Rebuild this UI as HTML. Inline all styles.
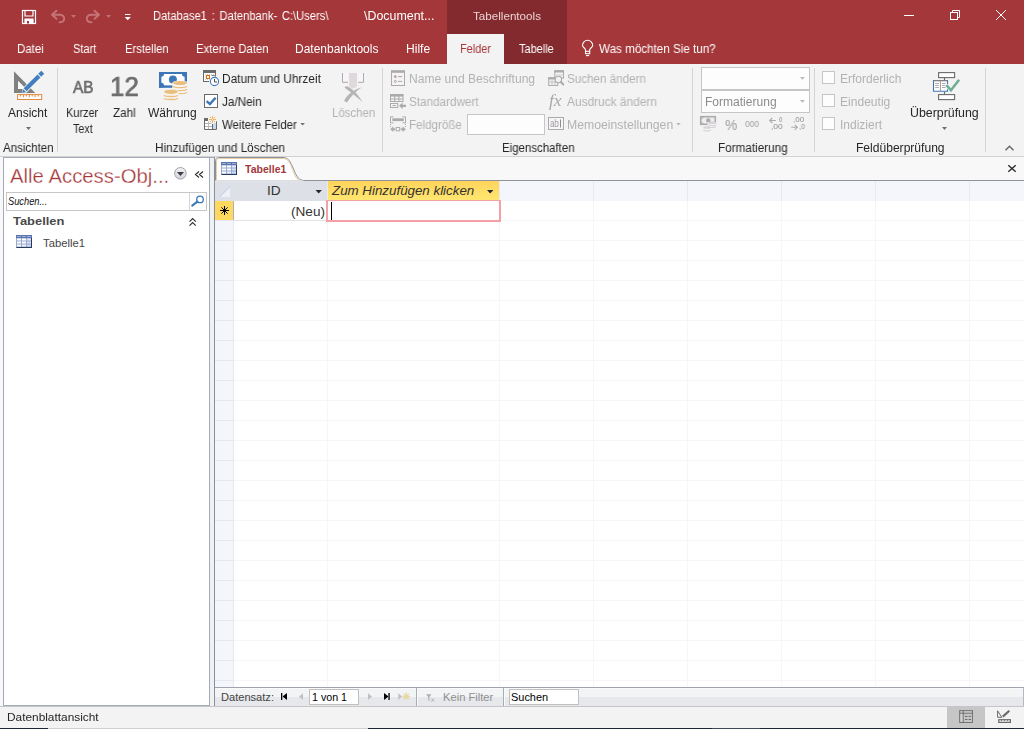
<!DOCTYPE html>
<html lang="de"><head><meta charset="utf-8"><title>Access - Database1</title>
<style>
html,body{margin:0;padding:0;background:#f1f1f1;}
body{width:1024px;height:729px;position:relative;overflow:hidden;font-family:"Liberation Sans",sans-serif;}
.a{position:absolute;}
.t{position:absolute;white-space:pre;line-height:1;transform-origin:0 0;}
.g{will-change:transform;}
svg{position:absolute;overflow:visible;}
.sep{position:absolute;width:1px;top:68px;height:84px;background:#d4d4d4;}
.cb{position:absolute;width:11px;height:11px;border:1px solid #c6c6c6;background:#fdfdfd;left:822px;}
.combo{position:absolute;left:701px;width:107px;height:21px;border:1px solid #c6c6c6;background:#fdfdfd;}
</style></head><body>
<!-- title + tab strip -->
<div class="a" id="titlebar" style="left:0;top:0;width:1024px;height:64px;background:#a4373a"></div>
<div class="a" id="ctx" style="left:447px;top:0;width:120px;height:64px;background:#822a2e"></div>
<div class="a" id="tabsel" style="left:447px;top:34px;width:57px;height:30px;background:#f3f3f3"></div>
<!-- ribbon -->
<div class="a" id="ribbon" style="left:0;top:64px;width:1024px;height:92px;background:#f3f3f3;border-bottom:1px solid #d2d2d2"></div>
<div class="sep" style="left:57px"></div>
<div class="sep" style="left:382px"></div>
<div class="sep" style="left:692px"></div>
<div class="sep" style="left:814px"></div>
<div class="sep" style="left:985px"></div>
<div class="a" style="left:467px;top:114px;width:76px;height:19px;border:1px solid #c6c6c6;background:#fdfdfd"></div>
<div class="combo" style="top:67px"></div>
<div class="combo" style="top:90px"></div>
<div class="cb" style="top:71px"></div><div class="cb" style="top:94px"></div><div class="cb" style="top:117px"></div>
<!-- work area -->
<div class="a" id="work" style="left:0;top:157px;width:1024px;height:549px;background:#f8f8f8"></div>
<div class="a" id="nav" style="left:3px;top:157px;width:205px;height:547px;background:#fff;border:1px solid #a3abb8;border-width:1px 1px 1px 1px"></div>
<div class="a" style="left:6px;top:192px;width:199px;height:17px;border:1px solid #c6c6c6;background:#fff"></div>
<div class="a" style="left:189px;top:193px;width:1px;height:17px;background:#d4d4d4"></div>
<div class="a" style="left:210px;top:157px;width:4px;height:549px;background:#f0f1f3;border-top:1px solid #a3abb8;box-sizing:border-box"></div>
<div class="a" id="split" style="left:214px;top:157px;width:1px;height:549px;background:#8a919d"></div>
<!-- document -->
<div class="a" id="grid" style="left:215px;top:181px;width:809px;height:506px;background:#fff"></div>
<div class="a" id="hdrline" style="left:215px;top:180px;width:809px;height:1px;background:#8f939b"></div>
<div class="a" id="hdrbg" style="left:215px;top:181px;width:809px;height:20px;background:#f5f6fc"></div>
<div class="a" id="selcol" style="left:215px;top:201px;width:18px;height:486px;background:#f5f6fc"></div>
<div class="a" id="gridlines" style="left:215px;top:201px;width:809px;height:486px;background:
 repeating-linear-gradient(to bottom,transparent 0,transparent 19px,#f6f6f7 19px,#f6f6f7 20px)"></div>
<div class="a" style="left:215px;top:201px;width:18px;height:486px;background:repeating-linear-gradient(to bottom,transparent 0,transparent 19px,#e6e8ee 19px,#e6e8ee 20px)"></div><div class="a" style="left:233px;top:201px;width:1px;height:486px;background:#e6e8ef"></div>
<div class="a" style="left:327px;top:201px;width:1px;height:486px;background:#f6f6f7"></div>
<div class="a" style="left:499px;top:181px;width:1px;height:20px;background:#e8e9ee"></div><div class="a" style="left:499px;top:201px;width:1px;height:486px;background:#f6f6f7"></div>
<div class="a" style="left:593px;top:181px;width:1px;height:20px;background:#e8e9ee"></div><div class="a" style="left:593px;top:201px;width:1px;height:486px;background:#f6f6f7"></div>
<div class="a" style="left:687px;top:181px;width:1px;height:20px;background:#e8e9ee"></div><div class="a" style="left:687px;top:201px;width:1px;height:486px;background:#f6f6f7"></div>
<div class="a" style="left:781px;top:181px;width:1px;height:20px;background:#e8e9ee"></div><div class="a" style="left:781px;top:201px;width:1px;height:486px;background:#f6f6f7"></div>
<div class="a" style="left:875px;top:181px;width:1px;height:20px;background:#e8e9ee"></div><div class="a" style="left:875px;top:201px;width:1px;height:486px;background:#f6f6f7"></div>
<div class="a" style="left:969px;top:181px;width:1px;height:20px;background:#e8e9ee"></div><div class="a" style="left:969px;top:201px;width:1px;height:486px;background:#f6f6f7"></div>
<div class="a" id="hdr1" style="left:215px;top:181px;width:112px;height:20px;background:#dde0e6"></div>
<div class="a" style="left:327px;top:181px;width:1px;height:20px;background:#e9ebef"></div>
<div class="a" id="hdr2" style="left:328px;top:181px;width:171px;height:19px;background:linear-gradient(#ffd45c,#ffe670)"></div>
<div class="a" id="rowsel" style="left:215px;top:201px;width:18px;height:19px;background:#ffd95f;border-right:1px solid #aab0be"></div>
<div class="a" style="left:233px;top:220px;width:93px;height:1px;background:#e2e2e4"></div>
<div class="a" id="active" style="left:326px;top:200px;width:171px;height:19px;border:2px solid #f4a0a5;border-top-width:1px;background:#fff"></div>
<div class="a" id="caret" style="left:331px;top:202px;width:1px;height:18px;background:#000"></div>
<!-- record nav -->
<div class="a" id="recnav" style="left:215px;top:687px;width:808px;height:18px;border-top:1px solid #9ea3ae;border-right:1px solid #b4b8c2;background:linear-gradient(#fafafb 0,#fafafb 1px,#f3f4f6 1px,#f3f4f6 9px,#e6e8ec 9px,#e6e8ec 100%)"></div>
<div class="a" style="left:309px;top:689px;width:48px;height:14px;border:1px solid #c0c0c0;background:#fff"></div>
<div class="a" style="left:509px;top:689px;width:68px;height:14px;border:1px solid #c0c0c0;background:#fff"></div>
<div class="a" style="left:416px;top:688px;width:1px;height:18px;background:#a8acb8"></div><div class="a" style="left:417px;top:688px;width:1px;height:18px;background:#fafafa"></div>
<div class="a" style="left:503px;top:688px;width:1px;height:18px;background:#a8acb8"></div><div class="a" style="left:504px;top:688px;width:1px;height:18px;background:#fafafa"></div>
<!-- status bar -->
<div class="a" style="left:0;top:706px;width:1024px;height:1px;background:#c6c6c6"></div>
<div class="a" id="status" style="left:0;top:707px;width:1024px;height:22px;background:#f3f3f3"></div>
<div class="a" style="left:947px;top:707px;width:38px;height:21px;background:#c6c6c6"></div>
<div class="a" style="left:0;top:728px;width:48px;height:1px;background:#1d2836"></div>
<div class="a" style="left:48px;top:728px;width:320px;height:1px;background:#d0d0d0"></div><div class="a" style="left:368px;top:728px;width:344px;height:1px;background:#1d2836"></div><div class="a" style="left:712px;top:728px;width:48px;height:1px;background:#3f4856"></div>
<div class="a" style="left:760px;top:728px;width:264px;height:1px;background:#1d2836"></div>
<svg width="1024" height="729" viewBox="0 0 1024 729" style="left:0;top:0">
<!-- QAT: save -->
<g id="i-save" fill="none" stroke="#fff" stroke-width="1.2">
<rect x="22.5" y="10.5" width="13" height="13"/>
<path d="M25 10.5V16H33V10.5" />
<path d="M25 23.5V19H33V23.5Z" fill="#fff"/>
<rect x="27" y="21" width="2" height="2.5" fill="#a4373a" stroke="none"/>
</g>
<!-- undo / redo (disabled) -->
<g id="i-undo" fill="none" stroke="#c47477" stroke-width="1.9" stroke-linecap="round" stroke-linejoin="round">
<path d="M56.5 10.8L52 14.8L56.5 18.8"/><path d="M52.5 14.8H59.5C66 14.8 65.5 22.3 59.5 22.3"/>
<path d="M94.5 10.8L99 14.8L94.5 18.8"/><path d="M98.5 14.8H91.5C85 14.8 85.500 22.3 91.5 22.3"/>
</g>
<path d="M71 15h5l-2.500 3z" fill="#c07074"/>
<path d="M106 15h5l-2.500 3z" fill="#c07074"/>
<!-- customize QAT -->
<rect x="125" y="14" width="5.500" height="1" fill="#fff"/>
<path d="M124.700 17h6.100l-3.050 3.300z" fill="#fff"/>
<!-- lightbulb -->
<g id="i-bulb" fill="none" stroke="#fff" stroke-width="1.100">
<path d="M585.500 51.300V50C585.500 48.200 582.500 47.300 582.500 45.400A5.100 5.100 0 1 1 592.700 45.400C592.700 47.300 589.700 48.200 589.700 50V51.300"/>
<rect x="585.500" y="51.300" width="4.200" height="2.400"/>
<path d="M586 55.600H589.200"/>
</g>
<!-- window controls -->
<g fill="none" stroke="#fff" stroke-width="1">
<path d="M904 15.500H914"/>
<rect x="950.500" y="12.500" width="7" height="7"/>
<path d="M952.500 12.500V10.500H959.500V17.500H957.500"/>
<path d="M996 10L1006 20M1006 10L996 20"/>
</g>

<!-- Ansicht big icon -->
<g id="i-view">
<path d="M18 80.700V89H26.300Z" fill="#fbfbfb"/><path d="M14 71.200V93H35.200ZM18 80.700V89H26.300Z" fill="#808080" fill-rule="evenodd"/>
<g transform="translate(22.100 92.900) rotate(-45)">
<path d="M-0.500 0L3.400 -2.900H29.900V2.900H3.400Z" fill="#f5f4f2"/>
<path d="M0 0L3.300 -2.100V2.100Z" fill="#437fc0"/>
<rect x="4.300" y="-2.100" width="19.600" height="4.200" fill="#437fc0"/>
<rect x="24.900" y="-2.100" width="4.300" height="4.200" fill="#437fc0"/>
</g>
<rect x="17.600" y="94.600" width="24.100" height="4.900" fill="#fff" stroke="#e18b3d" stroke-width="1"/>
<path d="M20.500 95v1.500M23.400 95v2.300M26.300 95v1.500M29.300 95v2.300M32.200 95v1.500M35.100 95v2.300M38.300 95v1.500" stroke="#e18b3d" stroke-width="1" fill="none"/>
</g>
<path d="M26 127h5l-2.500 3z" fill="#6e6e6e"/>

<!-- Währung big icon -->
<clipPath id="cpn"><rect x="159" y="72" width="28" height="15.600" rx="1.200"/></clipPath>
<g id="i-cur">
<rect x="159" y="72" width="28" height="15.600" rx="1.200" fill="#3c76b6"/>
<rect x="161.200" y="74" width="23.600" height="11.600" fill="#fff"/>
<g clip-path="url(#cpn)"><circle cx="161.200" cy="74" r="2.800" fill="#3c76b6"/><circle cx="184.800" cy="74" r="2.800" fill="#3c76b6"/>
<circle cx="161.200" cy="85.600" r="2.800" fill="#3c76b6"/><circle cx="184.800" cy="85.600" r="2.800" fill="#3c76b6"/></g>
<rect x="159" y="72" width="28" height="2" fill="#3c76b6"/><rect x="159" y="85.600" width="28" height="2" fill="#3c76b6"/>
<rect x="159" y="72" width="2.200" height="15.600" fill="#3c76b6"/><rect x="184.800" y="72" width="2.200" height="15.600" fill="#3c76b6"/>
<circle cx="172.900" cy="79.600" r="4" fill="#3c76b6"/>
<!-- right stack -->
<path d="M172.300 83v9.200a7.700 2.600 0 0 0 15.400 0V83a7.700 2.600 0 0 0 -15.400 0z" fill="#f6f3f0"/>
<g fill="none" stroke="#e9bf7e" stroke-width="1.300">
<path d="M173.300 92a6.700 1.600 0 0 0 13.400 0"/><path d="M173.300 89a6.700 1.600 0 0 0 13.400 0"/><path d="M173.300 86a6.700 1.600 0 0 0 13.400 0"/>
</g>
<ellipse cx="180" cy="83" rx="6.900" ry="2.100" fill="#e9bf7e"/>
<!-- left stack -->
<path d="M163.300 91.800v6.300a7.700 2.600 0 0 0 15.400 0V91.800a7.700 2.600 0 0 0 -15.400 0z" fill="#f6f3f0"/>
<g fill="none" stroke="#e9bf7e" stroke-width="1.300">
<path d="M164.300 97.900a6.700 1.600 0 0 0 13.400 0"/><path d="M164.300 94.900a6.700 1.600 0 0 0 13.400 0"/>
</g>
<ellipse cx="171" cy="91.800" rx="6.900" ry="2.100" fill="#e9bf7e"/>
</g>

<!-- Datum und Uhrzeit -->
<g id="i-date">
<rect x="203.500" y="72.500" width="12" height="9" fill="#fff" stroke="#6a6a6a"/>
<rect x="203" y="70" width="13" height="3" fill="#6a6a6a"/>
<path d="M205 74.500h10M205 77h2M205 79.500h6" stroke="#c9c9c9" stroke-dasharray="1 1" fill="none"/>
<path d="M211.500 75.500h4" stroke="#8a8a8a" fill="none"/>
<rect x="206.500" y="75.500" width="3" height="3" fill="#fff" stroke="#dd6b10" stroke-width="1"/>
<circle cx="214.500" cy="81.500" r="5.300" fill="#f5f4f2"/>
<circle cx="214.500" cy="81.500" r="4.100" fill="#fff" stroke="#3f7bbd" stroke-width="1.100"/>
<path d="M214.500 79V82H217" stroke="#4a4a4a" stroke-width="1" fill="none"/>
</g>
<!-- Ja/Nein checkbox -->
<rect x="204.500" y="94.500" width="13" height="13" fill="#fff" stroke="#6a6a6a"/>
<path d="M206.600 101.200L209.900 104.100L215.600 97.700" fill="none" stroke="#3c76b6" stroke-width="2.400"/>
<!-- Weitere Felder -->
<g id="i-more">
<rect x="205" y="121" width="7" height="8" fill="#fff"/>
<rect x="204" y="118" width="4" height="3" fill="#6a6a6a"/>
<path d="M204.500 118V129.500H216.500V121" stroke="#6a6a6a" fill="none"/>
<path d="M205 123.500h7M205 126.500h7" stroke="#b0b0b0" fill="none"/>
<path d="M208.500 121v8" stroke="#bdbdbd" fill="none"/>
<rect x="213" y="123" width="3" height="6" fill="#c5daf0"/>
<path d="M212.500 124V129" stroke="#6a6a6a" fill="none"/>
<circle cx="212.500" cy="119.500" r="4.300" fill="#f5f4f3"/>
<path d="M209.100 119.500h6.900M212.500 116.100v6.700" stroke="#ecb45c" stroke-width="1" fill="none"/>
<g fill="#ecb45c"><circle cx="210.400" cy="117.400" r="0.650"/><circle cx="214.600" cy="117.400" r="0.650"/><circle cx="210.400" cy="121.600" r="0.650"/><circle cx="214.600" cy="121.600" r="0.650"/><circle cx="212.500" cy="119.500" r="1.300"/></g>
<circle cx="212.500" cy="119.500" r="0.500" fill="#fff"/>
</g>
<path d="M300.300 123h4.600l-2.300 2.600z" fill="#6e6e6e"/>

<!-- Löschen (disabled) -->
<g id="i-del">
<rect x="342.500" y="73" width="6" height="9.300" fill="#f8f4f8"/><rect x="357.500" y="73" width="6" height="9.300" fill="#f8f4f8"/>
<path d="M342.500 73V82.300H348M363.500 73V82.300H358.200" fill="none" stroke="#ababab" stroke-width="1"/>
<path d="M349.100 73H357V86.500L353 88.700L349.100 86.500Z" fill="#ddd9dd"/>
<path d="M344.600 87.800Q345.100 85.700 347.200 86.300C353.500 89.300 358.300 95 362.400 101.900C356.200 96.700 350.600 92.200 344.600 87.800Z" fill="#b6b4b6"/><path d="M344.200 100.400C348 93.300 354.500 89.300 361.900 87.200C355.700 91 350.800 96.400 347.300 102.100Q345.300 102.700 344.200 100.400Z" fill="#b6b4b6"/>
</g>

<!-- Name und Beschriftung -->
<g id="i-name" stroke="#ababab" fill="none">
<rect x="391.500" y="71.500" width="13" height="14" fill="#f6f2f6"/>
<rect x="391" y="70.200" width="14" height="2.600" fill="#ababab" stroke="none"/>
<circle cx="395.300" cy="76.600" r="1" fill="#ababab"/><path d="M398 76.600h4.200"/>
<circle cx="395.300" cy="81.400" r="1"/><path d="M398 81.400h4.200"/>
</g>
<!-- Standardwert -->
<g id="i-def" stroke="#ababab" fill="none">
<rect x="390.500" y="95" width="12.500" height="6.500" fill="#f6f2f6"/>
<rect x="390" y="94" width="13.500" height="2.600" fill="#ababab" stroke="none"/>
<path d="M394.700 96v5.500M398.900 96v5.500M390.500 99h12.500"/>
<rect x="390.500" y="103.500" width="7.300" height="4" fill="#f6f2f6"/><path d="M392.500 105.500h3.500"/>
<path d="M399 105.800l3.600 -3.300v2.200h3.400v2.200h-3.400v2.200z" fill="#ababab" stroke="none"/>
</g>
<!-- Feldgröße -->
<g id="i-size" stroke="#ababab" fill="none">
<path d="M393.500 116.800h-3v6h3M402.500 116.800h3v6h-3"/>
<rect x="392.300" y="118.300" width="11.500" height="2.800" fill="#ababab" stroke="none"/>
<path d="M390.500 124v3M405.500 124v3" stroke-dasharray="1 1"/>
<rect x="396.200" y="127.500" width="3.500" height="3.300"/>
<path d="M390.200 129.200l3.200 -2.900v1.900h1.800v2h-1.800v1.900zM405.800 129.200l-3.200 -2.900v1.900h-1.800v2h1.800v1.900z" fill="#ababab" stroke="none"/>
</g>
<!-- Suchen ändern -->
<g id="i-lookup" stroke="#ababab" fill="none">
<rect x="554.800" y="71" width="8.700" height="7" fill="#f6f2f6"/><rect x="554.300" y="70.200" width="9.700" height="2.300" fill="#ababab" stroke="none"/>
<path d="M555 75h8.500" stroke="#cfcfcf"/>
<rect x="548.700" y="78" width="9" height="7.500" fill="#f6f2f6"/><rect x="548.200" y="77.200" width="10" height="2.300" fill="#ababab" stroke="none"/>
<path d="M548.700 82h9M552 79.500v6M555 79.500v6" stroke="#c4c4c4"/>
<circle cx="558.400" cy="79.500" r="3.200" fill="#f3eff3" stroke-width="1.100"/>
<path d="M560.800 82l2.500 2.500" stroke-width="2" stroke-linecap="round"/>
</g>
<!-- abl -->
<rect x="548.500" y="117.500" width="15" height="12" fill="#f8f5f8" stroke="#ababab"/>
<path d="M560.500 119.500v8" stroke="#8e8e8e" stroke-width="1"/>
<path d="M676.200 123h4.600l-2.300 2.600z" fill="#b8b8b8"/>
<!-- combo arrows -->
<path d="M800 77h4.800l-2.400 2.700z" fill="#b8b8b8"/><path d="M800 100h4.800l-2.400 2.700z" fill="#b8b8b8"/>
<!-- currency format (disabled) -->
<g id="i-curfmt">
<rect x="700.700" y="116.700" width="14.600" height="7.600" fill="#f0ecf0" stroke="#ababab" stroke-width="1.600"/><path d="M701 119.500l2.500-2.500M701 121.500l2.500 2.500" stroke="#ababab" stroke-width="1" fill="none"/>
<circle cx="708.300" cy="120.500" r="2.200" fill="#ababab"/>
<path d="M707.600 122.500v5.500a4 1.500 0 0 0 8.400 0v-5.500z" fill="#f3f3f3"/>
<g fill="none" stroke="#d6d3d6" stroke-width="1.100"><path d="M708.500 126.300a3.600 1.200 0 0 0 7.200 0M708.500 124.500a3.600 1.200 0 0 0 7.200 0"/></g>
<ellipse cx="712.100" cy="122.800" rx="3.700" ry="1.300" fill="#d6d3d6"/>
<ellipse cx="707" cy="127.500" rx="3.700" ry="1.300" fill="#d6d3d6"/>
<path d="M703.400 129.700a3.600 1.200 0 0 0 7.200 0" fill="none" stroke="#d6d3d6" stroke-width="1.100"/>
</g>
<!-- inc/dec decimal arrows -->
<g stroke="#ababab" fill="none" stroke-width="1.100">
<path d="M769.800 120.500h6M772.300 118l-2.600 2.500l2.600 2.500"/>
<path d="M791.200 127.300h6M794.800 124.800l2.600 2.500l-2.600 2.500"/>
</g>

<!-- Überprüfung icon -->
<g id="i-valid">
<rect x="938.600" y="72.600" width="16" height="5" fill="#fff" stroke="#6a6a6a" stroke-width="1.100"/>
<rect x="938.600" y="94.600" width="16" height="5" fill="#fff" stroke="#6a6a6a" stroke-width="1.100"/>
<path d="M944.500 78v2.300M944.500 91.800v2.500" stroke="#6a6a6a" stroke-width="1.100"/>
<rect x="933.500" y="80.700" width="14" height="10.700" fill="#fff"/>
<path d="M933 80.700h15" stroke="#6a6a6a" stroke-width="1.100"/>
<path d="M933.500 80.500V91.300H947.500V80.500" fill="none" stroke="#3c76b6" stroke-width="1.100"/>
<path d="M940.400 81v10.500" stroke="#9a9a9a" stroke-width="1"/>
<path d="M935.200 83.500h3.600M935.200 85.500h3.600M935.200 87.500h3.600M942 83.500h3.600M942 85.500h3M942 87.500h3.600" stroke="#ababab" stroke-width="1"/>
<path d="M946.300 85L950.900 90.200L959.100 79.700" fill="none" stroke="#f3f3f3" stroke-width="4"/>
<path d="M946.300 85L950.900 90.200L959.100 79.700" fill="none" stroke="#6fae96" stroke-width="2.500"/>
</g>
<path d="M942 127h5l-2.500 3z" fill="#6e6e6e"/>
<!-- collapse ribbon caret -->
<path d="M1005.500 150.300L1009.500 146.300L1013.500 150.300" fill="none" stroke="#6a6a6a" stroke-width="1.500"/>

<!-- nav pane header button -->
<defs><linearGradient id="gbtn" x1="0" y1="0" x2="0" y2="1"><stop offset="0" stop-color="#f2f2f4"/><stop offset="1" stop-color="#d2d2d8"/></linearGradient></defs>
<circle cx="180.400" cy="173.300" r="5.800" fill="url(#gbtn)" stroke="#a2a2ac" stroke-width="1"/>
<path d="M176.900 172h7.100l-3.550 4z" fill="#3d3d50"/>
<path d="M199 171.500L195.500 174.500L199 177.500M203 171.500L199.500 174.500L203 177.500" fill="none" stroke="#333" stroke-width="1.200"/>
<!-- magnifier -->
<circle cx="200" cy="199.400" r="3.300" fill="#fff" stroke="#3c76b6" stroke-width="1.300"/>
<path d="M197.500 201.600L192.200 205.600" stroke="#3c76b6" stroke-width="2" stroke-linecap="round"/>
<!-- double chevron -->
<path d="M189.500 221.600L192.650 218.600L195.800 221.600M189.500 225.600L192.650 222.600L195.800 225.600" fill="none" stroke="#333" stroke-width="1.200"/>
<!-- table icon (nav) -->
<g id="i-tbl">
<rect x="16" y="235" width="16" height="13" fill="#98a8cf"/>
<rect x="16" y="235" width="16" height="3" fill="#5a74ae"/>
<path d="M17 236.500h3.800M22 236.500h3.800M27 236.500h3.800" stroke="#9fb0d6" stroke-width="1"/>
<g fill="#fff"><rect x="17" y="238.500" width="4" height="2"/><rect x="22" y="238.500" width="4" height="2"/><rect x="27" y="238.500" width="4" height="2" fill="#dfe8fb"/>
<rect x="17" y="241.500" width="4" height="2"/><rect x="22" y="241.500" width="4" height="2"/><rect x="27" y="241.500" width="4" height="2" fill="#d4e0fa"/>
<rect x="17" y="244.500" width="4" height="2"/><rect x="22" y="244.500" width="4" height="2" fill="#eef2fc"/><rect x="27" y="244.500" width="4" height="2" fill="#c9d8f8"/></g>
<path d="M31.500 238V248M16.500 247.500H32" stroke="#2a3b5c" stroke-width="1" fill="none"/>
</g>

<!-- document tab -->
<path d="M215.500 181V160.500Q215.500 157.500 218.500 157.500H284C293.500 157.500 293.500 180.500 303 180.500V181Z" fill="#fff" stroke="#8d919a" stroke-width="1"/>
<path d="M216.500 181V161Q216.500 158.500 219 158.500H284C292.500 158.500 292.500 180.500 301 181" fill="none" stroke="#e6cda4" stroke-width="1"/>
<rect x="215" y="180.600" width="88.500" height="1" fill="#fff"/>
<g id="i-tbl2" transform="translate(205 -73)">
<rect x="16" y="235" width="16" height="13" fill="#98a8cf"/>
<rect x="16" y="235" width="16" height="3" fill="#5a74ae"/>
<path d="M17 236.500h3.800M22 236.500h3.800M27 236.500h3.800" stroke="#9fb0d6" stroke-width="1"/>
<g fill="#fff"><rect x="17" y="238.500" width="4" height="2"/><rect x="22" y="238.500" width="4" height="2"/><rect x="27" y="238.500" width="4" height="2" fill="#dfe8fb"/>
<rect x="17" y="241.500" width="4" height="2"/><rect x="22" y="241.500" width="4" height="2"/><rect x="27" y="241.500" width="4" height="2" fill="#d4e0fa"/>
<rect x="17" y="244.500" width="4" height="2"/><rect x="22" y="244.500" width="4" height="2" fill="#eef2fc"/><rect x="27" y="244.500" width="4" height="2" fill="#c9d8f8"/></g>
<path d="M31.500 238V248M16.500 247.500H32" stroke="#2a3b5c" stroke-width="1" fill="none"/>
</g>
<!-- doc close X -->
<path d="M1008.300 165.300L1015.700 171.700M1015.700 165.300L1008.300 171.700" stroke="#2b2b33" stroke-width="1.400" fill="none"/>
<!-- select all triangle -->
<path d="M230 186.500V197H219.500Z" fill="#eef0f5"/><path d="M219.500 197L230 186.500" stroke="#b7c6e6" stroke-width="1" fill="none"/>
<!-- header dropdown arrows -->
<path d="M315.500 190h6.400l-3.200 3.600z" fill="#222833"/>
<path d="M487 190h6.400l-3.200 3.600z" fill="#222833"/>
<!-- new row asterisk -->
<g stroke="#000" stroke-width="1" fill="none"><path d="M224.500 206v9M220 210.500h9M221.400 207.400l6.200 6.200M227.600 207.400l-6.200 6.200"/></g>
<circle cx="224.500" cy="210.500" r="1.600" fill="#000"/>

<!-- record navigation -->
<g fill="#000"><rect x="281" y="693" width="1.300" height="7"/><path d="M287 693v7l-4.500 -3.500z"/>
<rect x="388.400" y="693" width="1.300" height="7"/><path d="M384 693v7l4.500 -3.500z"/></g>
<g fill="#c0c0c0"><path d="M303 693.300v6.600l-4 -3.300z"/><path d="M368 693.300v6.600l4 -3.300z"/><path d="M398.300 693.300v6.600l3.800 -3.300z"/></g>
<g stroke="#e6d9a0" stroke-width="1.200" fill="none"><path d="M406.300 692.500v7.500M402.500 696.300h7.500M403.600 693.600l5.400 5.400M409 693.600l-5.400 5.400"/></g>
<!-- filter icon -->
<path d="M426 694.300h5.600l-2.200 2.600v4.300l-1.200 -0.900v-3.400z" fill="#b0b0b0"/>
<path d="M431.300 698.600l2.800 3M434.100 698.600l-2.800 3" stroke="#b0b0b0" stroke-width="1" fill="none"/>

<!-- status bar view icons -->
<g stroke="#6a6a6a" fill="none" stroke-width="1">
<rect x="959.700" y="710.700" width="12.700" height="11.700" fill="#d6d6d6"/>
<rect x="963.500" y="713.500" width="8.500" height="8.500" fill="#c6c6c6" stroke="none"/>
<path d="M960 713.200h12.400M963.200 711v11.400M965 716.400h2.500M968.600 716.400h2.500M965 719.500h2.500M968.600 719.500h2.500"/>
<path d="M997.600 710.800V717.300H1001.800Z"/>
<path d="M1002.800 716.600L1009.300 710.700" stroke-width="2.200"/>
<rect x="998.800" y="719.700" width="11.600" height="2.700" stroke-width="1.200"/><path d="M1001.500 720v1.200M1004.500 720v1.200M1007.500 720v1.200" stroke-width="0.800"/>
</g>
</svg>

<span class="t g" style="left:152.70px;top:10.0px;font-size:12px;color:#ffffff;transform:scaleX(0.9290);word-spacing:1.79px;">Database1 : Datenbank- C:\Users\</span>
<span class="t g" style="left:363.50px;top:10.0px;font-size:12px;color:#ffffff;transform:scaleX(1.0341);">\Document...</span>
<span class="t g" style="left:473.00px;top:10.5px;font-size:11px;color:#ecd3d4;transform:scaleX(1.0585);">Tabellentools</span>
<span class="t g" style="left:16.50px;top:43.0px;font-size:12px;color:#ffffff;transform:scaleX(0.9544);">Datei</span>
<span class="t g" style="left:73.00px;top:43.0px;font-size:12px;color:#ffffff;transform:scaleX(0.9228);">Start</span>
<span class="t g" style="left:124.50px;top:43.0px;font-size:12px;color:#ffffff;transform:scaleX(0.9345);">Erstellen</span>
<span class="t g" style="left:195.50px;top:43.0px;font-size:12px;color:#ffffff;transform:scaleX(0.9469);">Externe Daten</span>
<span class="t g" style="left:295.00px;top:43.0px;font-size:12px;color:#ffffff;transform:scaleX(0.9953);">Datenbanktools</span>
<span class="t g" style="left:405.50px;top:43.0px;font-size:12px;color:#ffffff;transform:scaleX(1.0069);">Hilfe</span>
<span class="t g" style="left:460.00px;top:43.0px;font-size:12px;color:#a4373a;transform:scaleX(0.9113);">Felder</span>
<span class="t g" style="left:519.00px;top:43.0px;font-size:12px;color:#ffffff;transform:scaleX(0.9126);">Tabelle</span>
<span class="t g" style="left:599.00px;top:43.0px;font-size:12px;color:#ffffff;transform:scaleX(0.9701);">Was möchten Sie tun?</span>
<span class="t g" style="left:8.00px;top:107.0px;font-size:12px;color:#262626;transform:scaleX(0.9996);">Ansicht</span>
<span class="t g" style="left:3.00px;top:142.0px;font-size:12px;color:#262626;transform:scaleX(0.9611);">Ansichten</span>
<span class="t g" style="left:73.30px;top:78.5px;font-size:17px;color:#6e6e6e;transform:scaleX(0.9043);-webkit-text-stroke:0.7px #6e6e6e;">AB</span>
<span class="t g" style="left:109.88px;top:73.5px;font-size:27px;color:#6e6e6e;transform:scaleX(0.9624);-webkit-text-stroke:0.7px #6e6e6e;">12</span>
<span class="t g" style="left:66.40px;top:107.0px;font-size:12px;color:#262626;transform:scaleX(0.9110);">Kurzer</span>
<span class="t g" style="left:72.60px;top:123.0px;font-size:12px;color:#262626;transform:scaleX(0.8909);">Text</span>
<span class="t g" style="left:113.00px;top:107.0px;font-size:12px;color:#262626;transform:scaleX(0.9701);">Zahl</span>
<span class="t g" style="left:148.40px;top:107.0px;font-size:12px;color:#262626;transform:scaleX(0.9913);">Währung</span>
<span class="t g" style="left:222.20px;top:73.0px;font-size:12px;color:#262626;transform:scaleX(0.9890);">Datum und Uhrzeit</span>
<span class="t g" style="left:222.20px;top:96.0px;font-size:12px;color:#262626;transform:scaleX(0.9772);">Ja/Nein</span>
<span class="t g" style="left:222.20px;top:119.0px;font-size:12px;color:#262626;transform:scaleX(0.9531);">Weitere Felder</span>
<span class="t g" style="left:331.60px;top:107.0px;font-size:12px;color:#b2b2b2;transform:scaleX(0.9531);">Löschen</span>
<span class="t g" style="left:155.30px;top:142.0px;font-size:12px;color:#262626;transform:scaleX(0.9796);">Hinzufügen und Löschen</span>
<span class="t g" style="left:408.90px;top:73.0px;font-size:12px;color:#b2b2b2;transform:scaleX(1.0054);">Name und Beschriftung</span>
<span class="t g" style="left:408.90px;top:96.0px;font-size:12px;color:#b2b2b2;transform:scaleX(0.9759);">Standardwert</span>
<span class="t g" style="left:408.90px;top:119.0px;font-size:12px;color:#b2b2b2;transform:scaleX(0.9651);">Feldgröße</span>
<span class="t g" style="left:567.30px;top:73.0px;font-size:12px;color:#b2b2b2;transform:scaleX(0.9687);">Suchen ändern</span>
<span class="t g" style="left:567.30px;top:96.0px;font-size:12px;color:#b2b2b2;transform:scaleX(0.9917);">Ausdruck ändern</span>
<span class="t g" style="left:567.30px;top:119.0px;font-size:12px;color:#b2b2b2;transform:scaleX(1.0204);">Memoeinstellungen</span>
<span class="t g" style="left:501.50px;top:142.0px;font-size:12px;color:#262626;transform:scaleX(0.9538);">Eigenschaften</span>
<span class="t g" style="left:704.60px;top:96.0px;font-size:12px;color:#8c8c8c;transform:scaleX(1.0030);">Formatierung</span>
<span class="t g" style="left:724.60px;top:117.0px;font-size:15px;color:#a0a0a0;transform:scaleX(0.9231);">%</span>
<span class="t g" style="left:744.90px;top:119.5px;font-size:9px;color:#a0a0a0;transform:scaleX(0.9327);">000</span>
<span class="t g" style="left:718.30px;top:142.0px;font-size:12px;color:#262626;transform:scaleX(0.9761);">Formatierung</span>
<span class="t g" style="left:839.60px;top:73.0px;font-size:12px;color:#b2b2b2;transform:scaleX(0.9987);">Erforderlich</span>
<span class="t g" style="left:839.60px;top:96.0px;font-size:12px;color:#b2b2b2;transform:scaleX(1.0048);">Eindeutig</span>
<span class="t g" style="left:839.61px;top:119.0px;font-size:12px;color:#b2b2b2;transform:scaleX(0.9932);">Indiziert</span>
<span class="t g" style="left:909.70px;top:107.0px;font-size:12px;color:#262626;transform:scaleX(1.0298);">Überprüfung</span>
<span class="t g" style="left:855.60px;top:142.0px;font-size:12px;color:#262626;transform:scaleX(1.0059);">Feldüberprüfung</span>
<span class="t" style="left:9.70px;top:164.7px;font-size:21px;color:#a4373a;transform:scaleX(0.9678);-webkit-text-stroke:0.3px #fff;">Alle Access-Obj...</span>
<span class="t" style="left:8.20px;top:195.5px;font-size:11px;color:#111;transform:scaleX(0.8454);font-style:italic;">Suchen...</span>
<span class="t" style="left:13.30px;top:216.2px;font-size:11.5px;color:#4a4a4a;transform:scaleX(1.1229);font-weight:bold;">Tabellen</span>
<span class="t" style="left:43.20px;top:237.8px;font-size:10.5px;color:#444;transform:scaleX(1.0720);">Tabelle1</span>
<span class="t" style="left:245.20px;top:164.2px;font-size:11.5px;color:#a4373a;transform:scaleX(0.9154);font-weight:bold;">Tabelle1</span>
<span class="t" style="left:266.55px;top:183.8px;font-size:13px;color:#333;transform:scaleX(1.0507);">ID</span>
<span class="t" style="left:332.33px;top:184.0px;font-size:13px;color:#333;transform:scaleX(1.0251);font-style:italic;">Zum Hinzufügen klicken</span>
<span class="t" style="left:290.80px;top:205.3px;font-size:13px;color:#333;transform:scaleX(1.0473);">(Neu)</span>
<span class="t" style="left:220.60px;top:691.5px;font-size:11px;color:#444;transform:scaleX(1.0071);">Datensatz:</span>
<span class="t" style="left:311.80px;top:691.5px;font-size:11px;color:#000;transform:scaleX(0.9704);">1 von 1</span>
<span class="t" style="left:443.40px;top:691.5px;font-size:11px;color:#8e8e8e;transform:scaleX(1.0150);">Kein Filter</span>
<span class="t" style="left:511.30px;top:691.5px;font-size:11px;color:#000;transform:scaleX(0.9949);">Suchen</span>
<span class="t g" style="left:7.20px;top:711.5px;font-size:11px;color:#262626;transform:scaleX(1.0778);">Datenblattansicht</span>
<span class="t g" style="left:549.70px;top:118.8px;font-size:10px;color:#9a9a9a;transform:scaleX(0.7871);">ab</span>
<span class="t g" style="left:779.20px;top:116.3px;font-size:8px;color:#8e8e8e;transform:scaleX(0.7600);">0</span>
<span class="t g" style="left:770.70px;top:123.3px;font-size:8px;color:#8e8e8e;transform:scaleX(1.0538);">,00</span>
<span class="t g" style="left:793.40px;top:116.3px;font-size:8px;color:#8e8e8e;transform:scaleX(0.9938);">,00</span>
<span class="t g" style="left:798.50px;top:123.3px;font-size:8px;color:#8e8e8e;transform:scaleX(0.8999);">,0</span>
<span class="t g" style="left:549.20px;top:92.5px;font-size:16px;color:#a8a8a8;transform:scaleX(1.0922);font-style:italic;font-family:'Liberation Serif',serif;">fx</span>
</body></html>
